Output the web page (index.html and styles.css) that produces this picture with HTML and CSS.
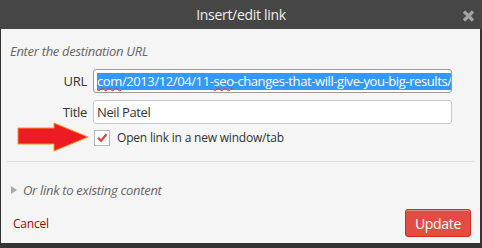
FILE: index.html
```html
<!DOCTYPE html>
<html>
<head>
<meta charset="utf-8">
<link rel="stylesheet" href="styles.css">
</head>
<body>
<div class="dialog">
  <div class="titlebar">
    <span class="title">Insert/edit link</span>
    <svg class="close" width="13" height="12" viewBox="0 0 13 12"><path d="M2 1.5 L11 10.5 M11 1.5 L2 10.5" stroke="#a3a3a3" stroke-width="3.2" stroke-linecap="butt"/></svg>
  </div>
  <div class="content">
    <p class="howto">Enter the destination URL</p>
    <div class="field">
      <label class="lbl">URL</label>
      <div class="input url"><span class="sel"><span class="spell">com</span>/2013/12/04/11-<span class="spell">seo</span>-changes-that-will-give-you-big-results/</span></div>
    </div>
    <div class="field">
      <label class="lbl">Title</label>
      <div class="input">Neil Patel</div>
    </div>
    <div class="checkrow">
      <span class="checkbox">
        <svg width="14" height="14" viewBox="0 0 14 14"><path d="M2.2 7.4 L3.8 5.9 L6 8.3 L10.6 2.6 L12.2 4 L6.1 11.4 Z" fill="#d9443a"/></svg>
      </span>
      <span class="checklabel">Open link in a new window/tab</span>
    </div>
    <svg class="arrow" width="74" height="30" viewBox="0 0 74 30">
      <polygon points="1,6 37,6 37,1 71,15 37,29 37,22 1,22" fill="#ec1c24" stroke="#f7941d" stroke-width="1"/>
    </svg>
    <div class="sep"></div>
    <div class="toggle"><span class="tri"></span><span>Or link to existing content</span></div>
    <div class="footer">
      <a class="cancel">Cancel</a>
      <button class="update">Update</button>
    </div>
  </div>
</div>
</body>
</html>
```
FILE: styles.css
```css
html, body {
  margin: 0;
  padding: 0;
  background: #353535;
  width: 482px;
  height: 248px;
  overflow: hidden;
  font-family: "Open Sans", "DejaVu Sans", sans-serif;
}
.dialog {
  width: 480px;
  position: relative;
}
.titlebar {
  height: 29px;
  background: #464646;
  display: flex;
  align-items: center;
  justify-content: center;
  position: relative;
  margin-right: -2px;
}
.title {
  color: #eeeeee;
  font-size: 14px;
  letter-spacing: -0.3px;
}
.close {
  position: absolute;
  left: 462px;
  top: 10px;
}
.content {
  background: #f5f5f5;
  height: 214px;
  margin-left: 1px;
  position: relative;
  box-sizing: border-box;
  padding: 12px 0 0 0;
}
.howto {
  margin: 0 0 0 9px;
  font-style: italic;
  color: #666;
  font-size: 13px;
  letter-spacing: -0.3px;
  line-height: 20px;
}
.field {
  display: flex;
  align-items: center;
  margin-top: 8px;
}
.field + .field { margin-top: 7px; }
.lbl {
  width: 92px;
  text-align: right;
  color: #333;
  font-size: 13px;
  letter-spacing: -0.3px;
  padding-right: 6px;
  box-sizing: border-box;
}
.input {
  width: 359px;
  height: 24px;
  box-sizing: border-box;
  border: 1px solid #c8c8c8;
  border-radius: 3px;
  background: #fff;
  font-size: 13px;
  color: #333;
  letter-spacing: -0.4px;
  padding: 0 3px;
  line-height: 22px;
  white-space: nowrap;
  overflow: hidden;
}
.input.url { border-color: #9a9a9a; }
.sel {
  background: #3399ff;
  color: #fff;
  display: inline-block;
  line-height: 17px;
}
.spell {
  text-decoration: underline wavy #e33;
  text-decoration-thickness: 1px;
}
.checkrow {
  display: flex;
  align-items: center;
  margin: 5px 0 0 93px;
}
.checkbox {
  width: 16px;
  height: 16px;
  box-sizing: border-box;
  border: 1px solid #b4b9be;
  background: #fff;
  display: flex;
  align-items: center;
  justify-content: center;
}
.checklabel {
  margin-left: 7px;
  font-size: 12px;
  color: #333;
  letter-spacing: -0.2px;
}
.arrow {
  position: absolute;
  left: 16px;
  top: 93px;
}
.sep {
  height: 1px;
  background: #dcdcdc;
  margin: 15px 6px 0 6px;
}
.toggle {
  display: flex;
  align-items: center;
  margin: 19px 0 0 10px;
  font-style: italic;
  color: #666;
  font-size: 13px;
  letter-spacing: -0.3px;
}
.tri {
  width: 0;
  height: 0;
  border-left: 6px solid #aaa;
  border-top: 4px solid transparent;
  border-bottom: 4px solid transparent;
  margin-right: 6px;
}
.footer {
  position: absolute;
  left: 0;
  right: 0;
  bottom: 6px;
  display: flex;
  justify-content: space-between;
  align-items: center;
  padding: 0 9px 0 12px;
}
.cancel {
  color: #a00;
  font-size: 12px;
  letter-spacing: -0.2px;
}
.update {
  width: 66px;
  height: 28px;
  background: #e14d43;
  border: 1px solid #d02c21;
  border-radius: 3px;
  color: #fff;
  font-family: "Open Sans", sans-serif;
  font-size: 14px;
  letter-spacing: -0.3px;
  padding: 0;
  box-shadow: inset 0 1px 0 #ec8a85;
}
```
